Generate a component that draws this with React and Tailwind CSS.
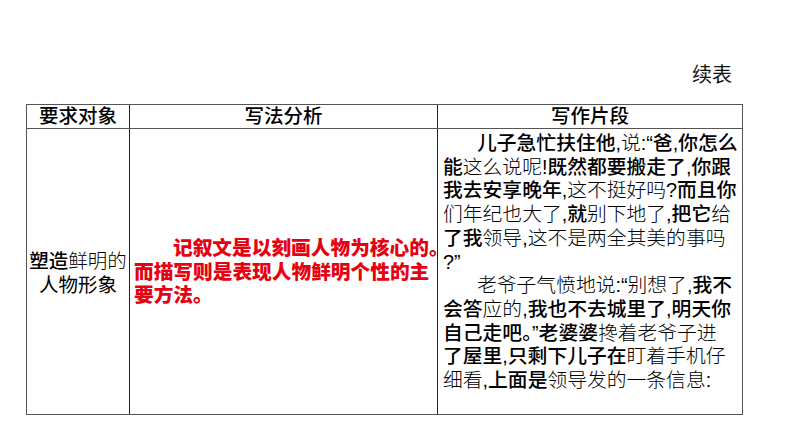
import React from "react";

const cjk = { fontFamily: '"Liberation Sans", "Noto Sans CJK SC", sans-serif' };

// [text, bold] segments per line of the right column
const fragment = [
  { indent: true, parts: [["儿子急忙扶住他", 1], [",说:“", 0], ["爸", 1], [",你怎么", 1]] },
  { parts: [["能", 1], ["这么说呢", 0], ["!既然都要搬走了", 1], [",你跟", 1]] },
  { parts: [["我去安享晚年", 1], [",这不挺好吗", 0], ["?而且你", 1]] },
  { parts: [["们年纪也大了", 0], [",就", 1], ["别下地了,", 0], ["把它", 1], ["给", 0]] },
  { parts: [["了我", 1], ["领导,这不是两全其美的事吗", 0]] },
  { parts: [["?”", 0]] },
  { indent: true, parts: [["老爷子气愤地说:“别想了,", 0], ["我不", 1]] },
  { parts: [["会答", 1], ["应的", 0], [",我也不去城里了,明天你", 1]] },
  { parts: [["自己走吧。”老婆婆", 1], ["搀着老爷子进", 0]] },
  { parts: [["了屋里,只剩下儿子在", 1], ["盯着手机仔", 0]] },
  { parts: [["细看,", 0], ["上面是", 1], ["领导发的一条信息:", 0]] },
];

export default function App() {
  return (
    <div className="w-[794px] h-[447px] bg-white text-black overflow-hidden" style={cjk}>
      <div className="flex justify-end pr-[62px] pt-[63px] h-[104px]">
        <span className="text-[20px] leading-[24px] text-[#111]">续表</span>
      </div>

      <div className="ml-[26px] w-[717px] border border-[#555]">
        <div className="grid grid-cols-[102px_308px_305px] h-[24px] border-b border-[#555] text-[19.5px] leading-[23px] font-medium">
          <div className="text-center">要求对象</div>
          <div className="text-center border-l border-[#222]">写法分析</div>
          <div className="text-center border-l border-[#222]">写作片段</div>
        </div>

        <div className="grid grid-cols-[102px_308px_305px] h-[285px]">
          <div className="flex flex-col justify-center items-center text-[19.5px] leading-[24px] pt-[2px]">
            <div className="whitespace-nowrap">
              <span className="font-medium">塑造</span>
              <span className="font-light">鲜明的</span>
            </div>
            <div className="whitespace-nowrap">人物形象</div>
          </div>

          <div className="border-l border-[#222] flex flex-col justify-center pl-[4px] pt-[2px] text-[19.7px] leading-[23.7px] font-black text-[#e60012] whitespace-nowrap">
            <div className="pl-[39px]">记叙文是以刻画人物为核心的。</div>
            <div>而描写则是表现人物鲜明个性的主</div>
            <div>要方法。</div>
          </div>

          <div className="border-l border-[#222] pl-[5px] pt-[3px] text-[19.8px] leading-[23.7px] whitespace-nowrap">
            {fragment.map((line, i) => (
              <div key={i} className={line.indent ? "pl-[34px]" : ""}>
                {line.parts.map(([t, b], j) => (
                  <span key={j} className={b ? "font-medium" : "font-light"}>
                    {t}
                  </span>
                ))}
              </div>
            ))}
          </div>
        </div>
      </div>
    </div>
  );
}
